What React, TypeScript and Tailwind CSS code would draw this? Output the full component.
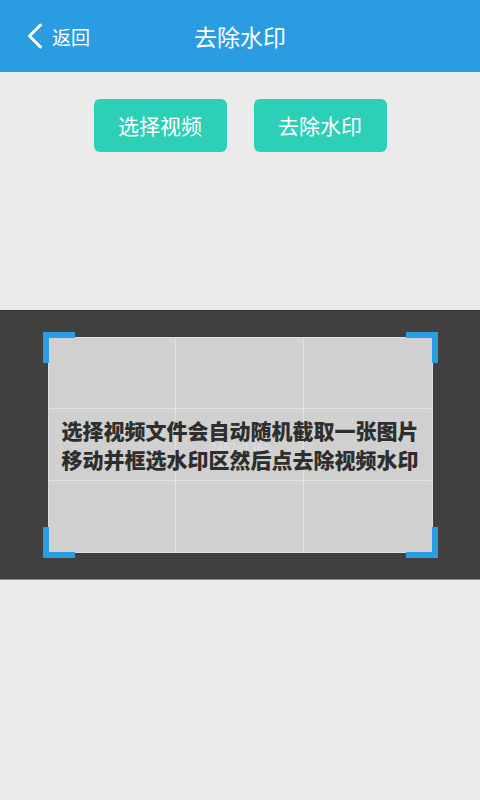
import React from "react";

const cjk = { fontFamily: '"Noto Sans CJK SC", "Noto Sans", sans-serif' };

function Corner({ pos }: { pos: "tl" | "tr" | "bl" | "br" }) {
  const place = {
    tl: "-left-[5px] -top-[5px] border-l-[6px] border-t-[6px]",
    tr: "-right-[5px] -top-[5px] border-r-[6px] border-t-[6px]",
    bl: "-left-[5px] -bottom-[5px] border-l-[6px] border-b-[6px]",
    br: "-right-[5px] -bottom-[5px] border-r-[6px] border-b-[6px]",
  }[pos];
  return (
    <div className={`absolute w-[32px] h-[31px] border-[#2b9de2] ${place}`} />
  );
}

export default function App() {
  return (
    <div className="w-[480px] h-[800px] bg-[#ebebeb] flex flex-col" style={cjk}>
      {/* Header */}
      <div className="h-[72px] bg-[#2a9de2] flex items-center relative shrink-0">
        <div className="flex items-center pl-[27px] gap-[9px] text-white">
          <svg width="16" height="26" viewBox="0 0 16 26" fill="none">
            <path
              d="M13.5 2 L2.5 13 L13.5 24"
              stroke="white"
              strokeWidth="3"
              strokeLinecap="round"
              strokeLinejoin="round"
            />
          </svg>
          <span className="text-[19px] leading-none">返回</span>
        </div>
        <div className="absolute inset-0 flex items-center justify-center pointer-events-none">
          <span className="text-white text-[23px] leading-none">去除水印</span>
        </div>
      </div>

      {/* Buttons */}
      <div className="flex justify-center gap-[27px] pt-[27px] shrink-0">
        <button className="w-[133px] h-[53px] rounded-[6px] bg-[#2dcfb7] text-white text-[21px]">
          选择视频
        </button>
        <button className="w-[133px] h-[53px] rounded-[6px] bg-[#2dcfb7] text-white text-[21px]">
          去除水印
        </button>
      </div>

      {/* Preview panel */}
      <div className="mt-[158px] h-[270px] bg-[#404040] border-t border-[#333333] border-b border-b-[#8a8a8a] flex items-center justify-center shrink-0">
        <div className="relative w-[385px] h-[216px]">
          <div className="w-full h-full bg-[#d0d0d0] border border-[#dedede] grid grid-cols-3 grid-rows-3">
            {Array.from({ length: 9 }).map((_, i) => (
              <div
                key={i}
                className={`${i % 3 !== 2 ? "border-r" : ""} ${i < 6 ? "border-b" : ""} border-[#e2e2e2]`}
              />
            ))}
          </div>
          <div className="absolute left-0 right-0 top-[105px] flex justify-center">
            <span className="text-white/25 text-[12px] font-bold leading-none" style={{ fontFamily: '"Liberation Sans", sans-serif' }}>
              2457x1362
            </span>
          </div>
          <div className="absolute inset-0 flex flex-col items-center justify-center">
            <span className="text-[#2e2e2e] text-[21px] font-black leading-[29px] whitespace-nowrap">
              选择视频文件会自动随机截取一张图片
            </span>
            <span className="text-[#2e2e2e] text-[21px] font-black leading-[29px] whitespace-nowrap">
              移动并框选水印区然后点去除视频水印
            </span>
          </div>
          <Corner pos="tl" />
          <Corner pos="tr" />
          <Corner pos="bl" />
          <Corner pos="br" />
        </div>
      </div>
    </div>
  );
}
